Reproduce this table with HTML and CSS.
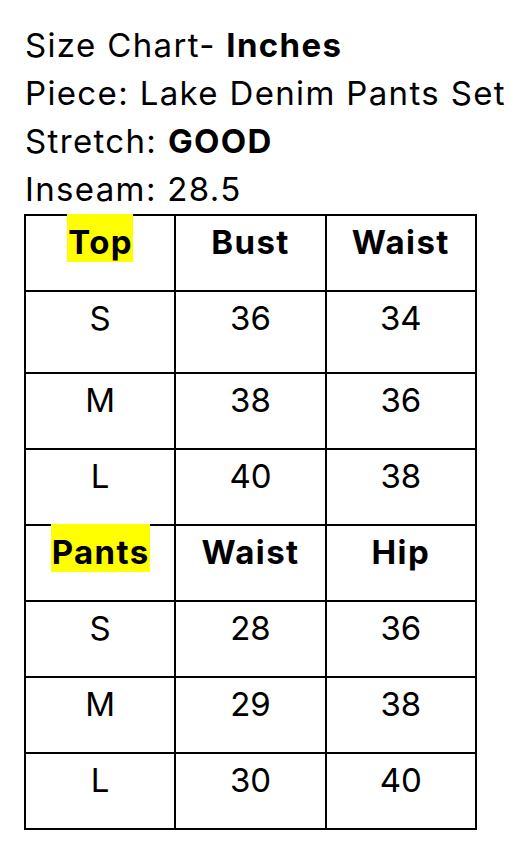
FILE: index.html
```html
<!DOCTYPE html>
<html>
<head>
<meta charset="utf-8">
<link rel="stylesheet" href="styles.css">
</head>
<body>
<div class="page">
  <div class="info">
    <p class="line">Size Chart- <b>Inches</b></p>
    <p class="line">Piece: Lake Denim Pants Set</p>
    <p class="line">Stretch: <b>GOOD</b></p>
    <p class="line">Inseam: 28.5</p>
  </div>
  <table class="chart">
    <tr class="head"><th><span class="hl">Top</span></th><th>Bust</th><th>Waist</th></tr>
    <tr class="tall"><td>S</td><td>36</td><td>34</td></tr>
    <tr><td>M</td><td>38</td><td>36</td></tr>
    <tr><td>L</td><td>40</td><td>38</td></tr>
    <tr class="head"><th><span class="hl">Pants</span></th><th>Waist</th><th>Hip</th></tr>
    <tr><td>S</td><td>28</td><td>36</td></tr>
    <tr><td>M</td><td>29</td><td>38</td></tr>
    <tr><td>L</td><td>30</td><td>40</td></tr>
  </table>
</div>
</body>
</html>
```
FILE: styles.css
```css
html, body {
  margin: 0;
  padding: 0;
  background: #fff;
}
body {
  font-family: Inter, "Liberation Sans", sans-serif;
  color: #000;
}
.page {
  padding: 21px 0 0 25px;
}
.info .line {
  margin: 0;
  font-size: 33px;
  line-height: 48px;
  letter-spacing: 1.35px;
  white-space: nowrap;
}
.info b {
  font-weight: 700;
}
.chart {
  border-collapse: collapse;
  margin-top: 1px;
  margin-left: -1px;
  table-layout: fixed;
  width: 453px;
}
.chart th, .chart td {
  height: 74px;
  border: 2px solid #000;
  padding: 6px 0 0;
  box-sizing: border-box;
  vertical-align: top;
  text-align: center;
  font-size: 33px;
  line-height: 40px;
}
.chart th {
  font-weight: 700;
  letter-spacing: 1.4px;
}
.chart tr {
  height: 76px;
}
.chart tr.tall {
  height: 82px;
}
.chart tr.tall td {
  height: 82px;
}
.hl {
  background: #ffff00;
  padding: 8px 0 0 1px;
}
```
